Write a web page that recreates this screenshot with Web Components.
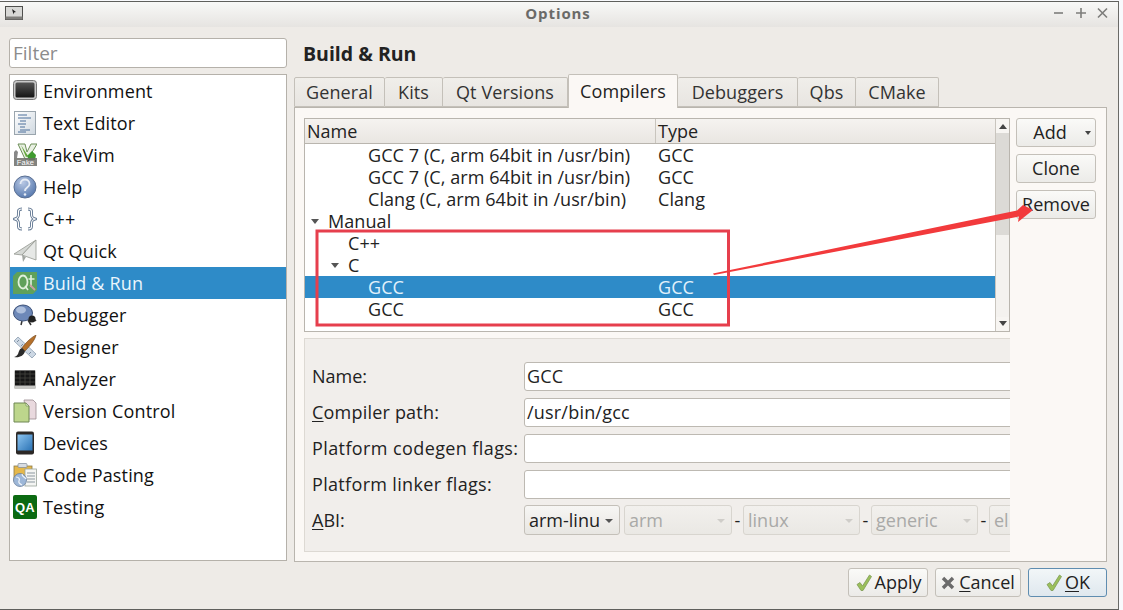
<!DOCTYPE html>
<html>
<head>
<meta charset="utf-8">
<style>
  html, body { margin: 0; padding: 0; background: #f8f9fc; height: 100%; overflow: hidden; }
  body { font-family: "Open Sans", "Noto Sans", sans-serif; font-size: 18px; color: #111; }
</style>
</head>
<body>
<options-window>
  <nav-sidebar slot="side"></nav-sidebar>
  <compiler-page slot="main"></compiler-page>
  <dialog-footer slot="foot"></dialog-footer>
</options-window>

<script>
"use strict";

const FONT = `"Open Sans", "Noto Sans", sans-serif`;

// icons for the category list
const ICONS = {
  env: `<svg width="24" height="24" viewBox="0 0 24 24"><defs><linearGradient id="e" x1="0" y1="0" x2="0" y2="1"><stop offset="0" stop-color="#555"/><stop offset="1" stop-color="#151515"/></linearGradient></defs><rect x="0.5" y="1.5" width="23" height="19" rx="3" fill="#c9c9c9" stroke="#777"/><rect x="2.5" y="3.5" width="19" height="15" rx="1.5" fill="url(#e)"/></svg>`,
  text: `<svg width="24" height="24" viewBox="0 0 24 24"><defs><linearGradient id="t" x1="0" y1="0" x2="1" y2="1"><stop offset="0" stop-color="#fff"/><stop offset="1" stop-color="#cfd8e0"/></linearGradient></defs><rect x="1.5" y="0.5" width="21" height="23" fill="url(#t)" stroke="#9aa5ad"/><path d="M5 4h9M5 7h13M7 10h6M5 13h8M7 16h5M7 19h10M5 21h8" stroke="#4a6f9a" stroke-width="1" fill="none"/></svg>`,
  vim: `<svg width="24" height="24" viewBox="0 0 24 24"><path d="M5 1h7l2 8 4-8h6l-9 15h-3z" fill="#e9f0e3" stroke="#6d8f58"/><path d="M8 2l5 12 2-1z" fill="#63a63a"/><path d="M19 8l4 4-1 5h-6l-2-4z" fill="#3f9a2e"/><path d="M1 9l2-2 2 2-1 6H1z" fill="#888"/><rect x="1" y="15" width="23" height="8" fill="#6d6d68" opacity=".85"/><text x="12.5" y="21.500" text-anchor="middle" font-family="Liberation Sans" font-size="7.500" fill="#fff">Fake</text></svg>`,
  help: `<svg width="24" height="24" viewBox="0 0 24 24"><defs><radialGradient id="h" cx=".4" cy=".3" r=".8"><stop offset="0" stop-color="#b8c8e4"/><stop offset="1" stop-color="#4c70a8"/></radialGradient></defs><circle cx="12" cy="12" r="11" fill="url(#h)" stroke="#5a6f92"/><path d="M7.500 9c0-6 9-6 9 0 0 3.500-4.500 3-4.500 7" fill="none" stroke="#e6ecf5" stroke-width="1.800"/><circle cx="12" cy="19.500" r="1.300" fill="#e6ecf5"/></svg>`,
  cpp: `<svg width="24" height="24" viewBox="0 0 24 24" fill="none"><g stroke="#5f7590" stroke-width="3"><path d="M9 2C5 2 5.500 4 5.500 7S5 11 2 12c3 1 3.500 2 3.500 5s-.5 5 3.500 5"/><path d="M15 2c4 0 3.500 2 3.500 5s.5 4 3.500 5c-3 1-3.500 2-3.500 5s.5 5-3.500 5"/></g><g stroke="#fff" stroke-width="1.200"><path d="M9 2C5 2 5.500 4 5.500 7S5 11 2 12c3 1 3.500 2 3.500 5s-.5 5 3.500 5"/><path d="M15 2c4 0 3.500 2 3.500 5s.5 4 3.500 5c-3 1-3.500 2-3.500 5s.5 5-3.500 5"/></g></svg>`,
  quick: `<svg width="24" height="24" viewBox="0 0 24 24"><path d="M23 1L1 15l8 1z" fill="#d5d8d5" stroke="#93978f" stroke-width=".8"/><path d="M23 1L9 16l14 5z" fill="#e6e8e6" stroke="#93978f" stroke-width=".8"/><path d="M9 16l1 7 3-5z" fill="#a2a6a2"/></svg>`,
  build: `<svg width="24" height="24" viewBox="0 0 24 24"><path d="M4 1h20v18l-4 4H0V5z" fill="#5fa15a"/><ellipse cx="10" cy="11" rx="4.500" ry="6.500" fill="none" stroke="#dff0dc" stroke-width="1.800"/><path d="M12 15l3 4M18 4v12M15.500 8h6" stroke="#dff0dc" stroke-width="1.600" fill="none"/><path d="M17 14l5 5" stroke="#c9a0a0" stroke-width="2"/></svg>`,
  debug: `<svg width="24" height="24" viewBox="0 0 24 24"><path d="M15 17l3 5M19 14l4 4M9 18l-1 4" stroke="#333" stroke-width="1.500"/><ellipse cx="10" cy="10" rx="9.500" ry="8" fill="#6d88b8" stroke="#3f5379"/><ellipse cx="8" cy="7" rx="5" ry="3.500" fill="#aebfdc"/><circle cx="19" cy="16" r="3.500" fill="#222"/></svg>`,
  design: `<svg width="24" height="24" viewBox="0 0 24 24"><path d="M1 6l4-4 18 17-4 4z" fill="#cdd8e4" stroke="#8b9db0" stroke-width=".8"/><path d="M6 5l-2 2M10 9l-2 2M14 13l-2 2M18 17l-2 2" stroke="#7c8da0"/><path d="M23 0c-4 2-10 7-14 13l3 3C17 11 22 5 23 0z" fill="#b5702a" stroke="#6f4218" stroke-width=".6"/><path d="M9 13c-3 1-3 4-4 6-1 2-3 3-4 3 5 1 10-1 11-6z" fill="#2b2b2b"/></svg>`,
  analyzer: `<svg width="24" height="24" viewBox="0 0 24 24"><rect x="1" y="3" width="22" height="19" rx="1.500" fill="#c7c7c4"/><rect x="2" y="3.500" width="20" height="15" fill="#161616"/><path d="M2 7h20M2 11h20M2 15h20M7 4v14M12 4v14M17 4v14" stroke="#45453f" stroke-width=".8"/></svg>`,
  vcs: `<svg width="24" height="24" viewBox="0 0 24 24"><path d="M11 1h9l3 3v16h-9z" fill="#e9d9de" stroke="#9a8a90" stroke-width=".8"/><path d="M1 4h12l3 3v16H1z" fill="#bdd68c" stroke="#6f8755"/><path d="M13 4v3h3z" fill="#e8f2d4" stroke="#6f8755" stroke-width=".6"/></svg>`,
  devices: `<svg width="24" height="24" viewBox="0 0 24 24"><defs><linearGradient id="d" x1="0" y1="0" x2="1" y2="1"><stop offset="0" stop-color="#8cc4f0"/><stop offset="1" stop-color="#2a72b4"/></linearGradient></defs><rect x="3" y="0.500" width="18" height="23" rx="2" fill="#2c2826"/><rect x="4.500" y="3.500" width="15" height="16" fill="url(#d)"/></svg>`,
  paste: `<svg width="24" height="24" viewBox="0 0 24 24"><rect x="1" y="3" width="18" height="15" fill="#e5b84b" stroke="#8c7a48" stroke-width=".8"/><rect x="5" y="0.500" width="9" height="4" rx="1" fill="#d8dde3" stroke="#7f8a96" stroke-width=".7"/><rect x="12" y="6" width="11.500" height="17" fill="#f4f5f3" stroke="#9aa39a" stroke-width=".8"/><path d="M14 10h8M14 13h8M14 16h8M14 19h8" stroke="#8b979f"/><circle cx="7" cy="17" r="6.500" fill="#9db7d8" stroke="#6a7f9c" stroke-width=".8"/><path d="M3 14c3 0 4 2 3 4s1 3 3 4M9 11c0 3 3 3 4 5" stroke="#f1f5fa" stroke-width="1.200" fill="none"/></svg>`,
  qa: `<svg width="24" height="24" viewBox="0 0 24 24"><rect width="24" height="24" rx="2" fill="#0b6a12"/><text x="12" y="17" text-anchor="middle" font-family="Liberation Sans" font-weight="700" font-size="13" fill="#fff">QA</text></svg>`,
  check: `<svg width="18" height="18" viewBox="0 0 18 18"><path d="M2 10.500l3-2 2.500 3.500L14.500 1l2 1.500L8 16.500H6z" fill="#9bc05b" stroke="#7f9a55" stroke-width=".8"/></svg>`,
  cross: `<svg width="14" height="14" viewBox="0 0 14 14"><path d="M2 2l10 10M12 2L2 12" stroke="#6b6b6b" stroke-width="3.400"/></svg>`,
};

// options-window : title bar + two columns + footer
class OptionsWindow extends HTMLElement {
  constructor() {
    super();
    this.attachShadow({ mode: "open" }).innerHTML = `
      <style>
        :host {
          display: flex; flex-direction: column; box-sizing: border-box;
          width: 1119px; height: 609px; margin-top: 1px;
          background: #eeebe7;
          border-top: 1px solid #5f5f5c; border-right: 1px solid #6a6a67; border-bottom: 1px solid #5f5f5c;
          font-family: ${FONT}; position: relative;
        }
        .title {
          height: 25px; flex: none; display: flex; align-items: center; justify-content: space-between;
          box-sizing: border-box; padding: 0 7px 3px 5px;
          background: linear-gradient(#f8f8f7, #e6e4e1);
        }
        .title b { font-size: 15px; color: #6a6a68; letter-spacing: .9px; margin-left: 42px; }
        .ctl { display: flex; gap: 6px; }
        .body { flex: 1; display: flex; padding: 11px 10px 0 9px; gap: 7px; min-height: 0; }
        .foot { flex: none; height: 47px; }
      </style>
      <div class="title">
        <svg width="18" height="14" viewBox="0 0 18 14"><rect x=".5" y=".5" width="17" height="13" fill="#d8d8d6" stroke="#4f4f4d"/><rect x=".5" y="10.500" width="17" height="3" fill="#807f7c"/><path d="M7 3l4 3-2 .5-.5 2z" fill="#222"/></svg>
        <b>Options</b>
        <div class="ctl">
          <svg width="16" height="14" viewBox="0 0 16 14" stroke="#7d7d7b" stroke-width="1.600"><path d="M3 7h9"/></svg>
          <svg width="16" height="14" viewBox="0 0 16 14" stroke="#7d7d7b" stroke-width="1.600"><path d="M3 7h10M8 2v10"/></svg>
          <svg width="16" height="14" viewBox="0 0 16 14" stroke="#7d7d7b" stroke-width="1.600"><path d="M3 2.500l9 9M12 2.500l-9 9"/></svg>
        </div>
      </div>
      <div class="body">
        <slot name="side"></slot>
        <slot name="main"></slot>
      </div>
      <div class="foot"><slot name="foot"></slot></div>
      <red-marks></red-marks>
    `;
  }
}

// red-marks : the annotations drawn on top of the screenshot
class RedMarks extends HTMLElement {
  constructor() {
    super();
    this.attachShadow({ mode: "open" }).innerHTML = `
      <style>
        :host { position: absolute; left: 0; top: -2px; width: 1119px; height: 610px; pointer-events: none; }
        svg { display: block; }
      </style>
      <svg width="1119" height="610" viewBox="0 0 1119 610">
        <rect x="317" y="231" width="411.500" height="94" fill="none" stroke="#e63f4d" stroke-width="3"/>
        <path d="M713 273.500 L1017 210.500 L1023 205 L1033 210 L1018 222 L1019 216.500 L714 275 Z" fill="#f23a3c"/>
      </svg>
    `;
  }
}

// nav-sidebar : filter box + category list
class NavSidebar extends HTMLElement {
  constructor() {
    super();
    const items = [
      ["env", "Environment"], ["text", "Text Editor"], ["vim", "FakeVim"], ["help", "Help"],
      ["cpp", "C++"], ["quick", "Qt Quick"], ["build", "Build & Run"], ["debug", "Debugger"],
      ["design", "Designer"], ["analyzer", "Analyzer"], ["vcs", "Version Control"],
      ["devices", "Devices"], ["paste", "Code Pasting"], ["qa", "Testing"],
    ];
    this.attachShadow({ mode: "open" }).innerHTML = `
      <style>
        :host { display: flex; flex-direction: column; width: 278px; gap: 6px; }
        .filter {
          height: 30px; box-sizing: border-box; border: 1px solid #b5b1aa; border-radius: 3px;
          background: #fff; padding: 0 3px; font-size: 19px; line-height: 28px; color: #8c8c8c;
        }
        ul {
          list-style: none; margin: 0; padding: 0; height: 487px; box-sizing: border-box;
          background: #fff; border: 1px solid #b5b1aa;
        }
        li {
          height: 32px; display: flex; align-items: center; gap: 6px; padding-left: 3px;
          font-size: 18px; letter-spacing: .15px; color: #111; white-space: nowrap;
        }
        li.on { background: #2e8bc8; color: #eaf5fc; }
        svg { display: block; flex: none; }
      </style>
      <div class="filter">Filter</div>
      <ul>
        ${items.map(([ic, label]) => `<li class="${ic === "build" ? "on" : ""}">${ICONS[ic]}<span>${label.replace("&", "&amp;")}</span></li>`).join("")}
      </ul>
    `;
  }
}

// compiler-page : heading, tab bar, panel
class CompilerPage extends HTMLElement {
  constructor() {
    super();
    const tabs = [["General", 91], ["Kits", 58], ["Qt Versions", 125], ["Compilers", 110], ["Debuggers", 120], ["Qbs", 58], ["CMake", 83]];
    this.attachShadow({ mode: "open" }).innerHTML = `
      <style>
        :host { display: flex; flex-direction: column; width: 813px; }
        h1 { margin: 0 0 0 9px; font-size: 19.5px; font-weight: 700; line-height: 31px; height: 37px; color: #222; }
        .tabs { display: flex; height: 32px; align-items: flex-end; position: relative; z-index: 1; }
        .tab {
          box-sizing: border-box; height: 30px; display: flex; align-items: center; justify-content: center;
          background: linear-gradient(#f0eeea, #e8e5e1); border: 1px solid #c4c0b9; border-left-width: 0;
          font-size: 18px; letter-spacing: .1px; color: #333; border-radius: 2px 2px 0 0;
        }
        .tab:first-child { border-left-width: 1px; }
        .tab.on { height: 34px; margin-bottom: -1px; padding-bottom: 2px; background: #fbf8f5; border-left-width: 1px; border-bottom: 0; color: #222; }
        .panel {
          box-sizing: border-box; height: 455px; background: #fbf8f5; border: 1px solid #b9b5ae;
          display: flex; gap: 6px; padding: 10px 10px 9px 9px;
        }
        .left { width: 706px; display: flex; flex-direction: column; gap: 6px; flex: none; }
        .btns { display: flex; flex-direction: column; gap: 7px; }
      </style>
      <h1>Build &amp; Run</h1>
      <div class="tabs">
        ${tabs.map(([t, w]) => `<div class="tab ${t === "Compilers" ? "on" : ""}" style="width:${w}px">${t}</div>`).join("")}
      </div>
      <div class="panel">
        <div class="left">
          <compiler-tree></compiler-tree>
          <detail-form></detail-form>
        </div>
        <div class="btns">
          <push-button menu>Add</push-button>
          <push-button>Clone</push-button>
          <push-button>Remove</push-button>
        </div>
      </div>
    `;
  }
}

// compiler-tree : header + rows + scrollbar
class CompilerTree extends HTMLElement {
  constructor() {
    super();
    const rows = [
      [3, "GCC 7 (C, arm 64bit in /usr/bin)", "GCC"],
      [3, "GCC 7 (C, arm 64bit in /usr/bin)", "GCC"],
      [3, "Clang (C, arm 64bit in /usr/bin)", "Clang"],
      [1, "Manual", "", true],
      [2, "C++", ""],
      [2, "C", "", true],
      [3, "GCC", "GCC", false, true],
      [3, "GCC", "GCC"],
    ];
    this.attachShadow({ mode: "open" }).innerHTML = `
      <style>
        :host {
          display: flex; box-sizing: border-box; height: 214px; background: #fff;
          border: 1px solid #b9b5ae; overflow: hidden;
        }
        .list { flex: 1; min-width: 0; }
        .head { display: flex; height: 25px; box-sizing: border-box; background: linear-gradient(#f5f3f0, #e9e6e2); border-bottom: 1px solid #b9b5ae; }
        .head div { font-size: 18px; color: #222; padding-left: 2px; line-height: 25px; }
        .head .n { width: 351px; box-sizing: border-box; border-right: 1px solid #c9c5be; }
        .row { display: flex; height: 22px; line-height: 23px; font-size: 18px; letter-spacing: .08px; color: #222; white-space: nowrap; }
        .row.on { background: #2e8bc8; color: #e2f1fb; }
        .n2 { width: 351px; flex: none; position: relative; box-sizing: border-box; }
        .t2 { padding-left: 2px; }
        .tri { position: absolute; width: 0; height: 0; top: 9px; border: 4.500px solid transparent; border-top: 5px solid #555; border-bottom: 0; }
        .sb { width: 13px; flex: none; border-left: 1px solid #c9c5be; background: #f0eeea; display: flex; flex-direction: column; }
        .arrow { height: 14px; flex: none; display: flex; align-items: center; justify-content: center; background: #f7f5f2; }
        .thumb { height: 102px; flex: none; background: #dcdad6; }
        .rest { flex: 1; background: #f4f2ef; }
      </style>
      <div class="list">
        <div class="head"><div class="n">Name</div><div>Type</div></div>
        ${rows.map(([lvl, name, type, open, on]) => `
          <div class="row ${on ? "on" : ""}">
            <div class="n2" style="padding-left:${3 + (lvl - 1) * 20 + 20}px">
              ${open ? `<i class="tri" style="left:${6 + (lvl - 1) * 20}px"></i>` : ""}${name}
            </div>
            <div class="t2">${type}</div>
          </div>`).join("")}
      </div>
      <div class="sb">
        <div class="arrow"><svg width="10" height="6"><path d="M1 6l4-5 4 5z" fill="#444"/></svg></div>
        <div class="thumb"></div>
        <div class="rest"></div>
        <div class="arrow"><svg width="10" height="6"><path d="M1 0l4 5 4-5z" fill="#444"/></svg></div>
      </div>
    `;
  }
}

// detail-form : name / path / flags / abi rows, clipped on the right
class DetailForm extends HTMLElement {
  constructor() {
    super();
    const inputs = [
      ["Name:", "GCC", 0],
      ["<u>C</u>ompiler path:", "/usr/bin/gcc", .2],
      ["Platform codegen flags:", "", .4],
      ["Platform linker flags:", "", .33],
    ];
    const off = [["arm", 108, 11], ["linux", 117, 11], ["generic", 107, 11], ["el", 60, 0]];
    this.attachShadow({ mode: "open" }).innerHTML = `
      <style>
        :host {
          display: block; box-sizing: border-box; height: 214px; background: #f1eeeb;
          border: 1px solid #ddd9d3; border-right: 0; overflow: hidden;
          padding: 22px 0 0 7px; font-size: 18px; color: #222;
        }
        .line { display: flex; align-items: center; height: 30px; margin-bottom: 6px; width: 900px; white-space: nowrap; }
        .line > span:first-child { width: 212px; flex: none; }
        u { text-underline-offset: 2px; }
        .inp {
          width: 600px; height: 29px; box-sizing: border-box; background: #fff; border: 1px solid #bdb9b2;
          border-radius: 3px; line-height: 27px; padding-left: 2px; letter-spacing: .2px;
        }
        .combo { display: flex; align-items: center; }
        .dash { text-align: center; flex: none; }
        .cb {
          height: 30px; box-sizing: border-box; border: 1px solid #c4c0b9; border-radius: 3px; flex: none;
          background: linear-gradient(#f7f6f4, #e8e6e2); display: flex; align-items: center; justify-content: space-between;
          padding: 0 6px 0 4px; color: #222;
        }
        .cb.off { border-color: #d8d5cf; color: #a9a9a7; background: linear-gradient(#f2f0ed, #eae8e4); }
        .cb i { width: 0; height: 0; border: 4px solid transparent; border-top: 4px solid #555; border-bottom: 0; margin-top: 1px; }
        .cb.off i { border-top-color: #cfcdc9; }
      </style>
      ${inputs.map(([l, v, ls]) => `<div class="line"><span style="letter-spacing:${ls}px">${l}</span><div class="inp">${v}</div></div>`).join("")}
      <div class="line">
        <span><u>A</u>BI:</span>
        <div class="combo">
          <div class="cb" style="width:96px;margin-right:4px">arm-linu<i></i></div>
          ${off.map(([t, w, g]) => `<div class="cb off" style="width:${w}px">${t}<i></i></div>${g ? `<div class="dash" style="width:${g}px">-</div>` : ""}`).join("")}
        </div>
      </div>
    `;
  }
}

// push-button
class PushButton extends HTMLElement {
  constructor() {
    super();
    this.attachShadow({ mode: "open" }).innerHTML = `
      <style>
        :host {
          display: flex; align-items: center; justify-content: center; box-sizing: border-box;
          width: 80px; height: 29px; padding-bottom: 2px; border: 1px solid #c4c0b9; border-radius: 3px;
          background: linear-gradient(#fafaf8, #ecebe8); font-size: 18px; color: #222; position: relative;
        }
        :host([default]) { border-color: #5f8db0; background: linear-gradient(#f2f6f8, #dfe8ee); }
        i { position: absolute; right: 4px; top: 12px; width: 0; height: 0; border: 3.500px solid transparent; border-top: 4px solid #444; border-bottom: 0; }
        .m { margin-right: 12px; }
        span { display: flex; align-items: center; gap: 2px; }
      </style>
      <span class="${this.hasAttribute("menu") ? "m" : ""}"><slot></slot></span>
      ${this.hasAttribute("menu") ? "<i></i>" : ""}
    `;
  }
}

// dialog-footer : Apply / Cancel / OK
class DialogFooter extends HTMLElement {
  constructor() {
    super();
    this.attachShadow({ mode: "open" }).innerHTML = `
      <style>
        :host { display: flex; justify-content: flex-end; gap: 7px; padding: 6px 11px 0 0; }
        u { text-underline-offset: 2px; }
        svg { flex: none; margin-top: 2px; }
        .c svg { margin-right: 2px; }
      </style>
      <push-button style="width:80px">${ICONS.check}Apply</push-button>
      <push-button class="c" style="width:86px">${ICONS.cross}<span><u>C</u>ancel</span></push-button>
      <push-button style="width:79px" default>${ICONS.check}<span><u>O</u>K</span></push-button>
    `;
  }
}

customElements.define("push-button", PushButton);
customElements.define("red-marks", RedMarks);
customElements.define("nav-sidebar", NavSidebar);
customElements.define("compiler-tree", CompilerTree);
customElements.define("detail-form", DetailForm);
customElements.define("compiler-page", CompilerPage);
customElements.define("dialog-footer", DialogFooter);
customElements.define("options-window", OptionsWindow);
</script>
</body>
</html>
